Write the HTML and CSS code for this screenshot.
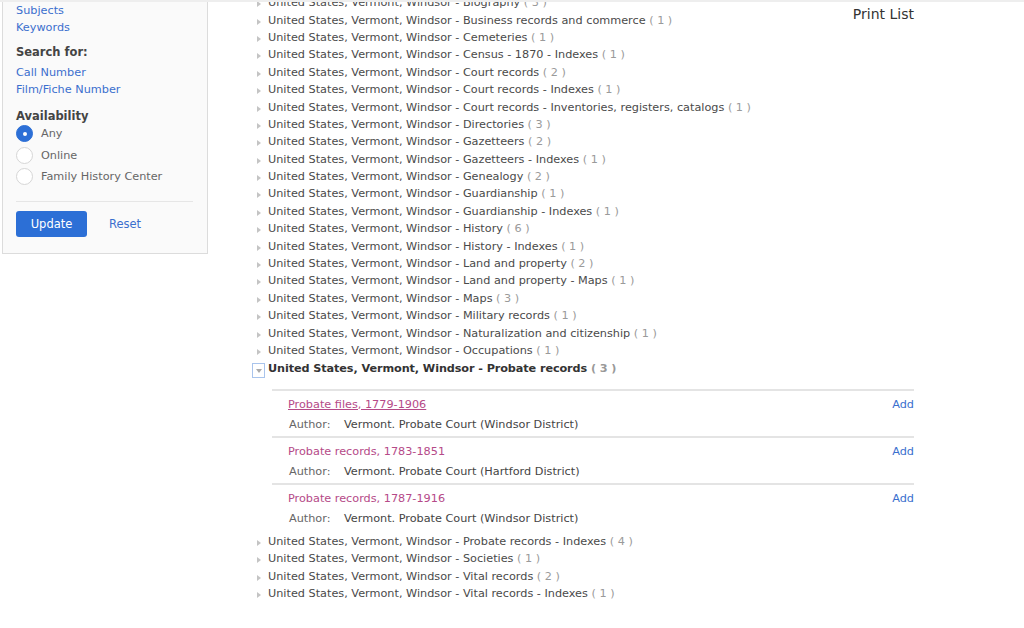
FILE: index.html
```html
<!DOCTYPE html>
<html>
<head>
<meta charset="utf-8">
<link rel="stylesheet" href="styles.css">
</head>
<body>
<div class="page">
  <aside class="sidebar">
    <a class="side-link" href="#">Subjects</a>
    <a class="side-link" href="#">Keywords</a>
    <h3 class="side-head">Search for:</h3>
    <a class="side-link" href="#">Call Number</a>
    <a class="side-link" href="#">Film/Fiche Number</a>
    <h3 class="side-head avail">Availability</h3>
    <label class="radio"><span class="dot on"></span>Any</label>
    <label class="radio"><span class="dot"></span>Online</label>
    <label class="radio"><span class="dot"></span>Family History Center</label>
    <div class="side-actions">
      <button class="btn">Update</button>
      <a class="reset" href="#">Reset</a>
    </div>
  </aside>
  <main class="main">
    <div class="tools"><a class="print" href="#">Print List</a></div>
    <ul class="tree">
      <li class="row"><span class="tri"></span>United States, Vermont, Windsor - Biography <span class="cnt">( 3 )</span></li>
      <li class="row"><span class="tri"></span>United States, Vermont, Windsor - Business records and commerce <span class="cnt">( 1 )</span></li>
      <li class="row"><span class="tri"></span>United States, Vermont, Windsor - Cemeteries <span class="cnt">( 1 )</span></li>
      <li class="row"><span class="tri"></span>United States, Vermont, Windsor - Census - 1870 - Indexes <span class="cnt">( 1 )</span></li>
      <li class="row"><span class="tri"></span>United States, Vermont, Windsor - Court records <span class="cnt">( 2 )</span></li>
      <li class="row"><span class="tri"></span>United States, Vermont, Windsor - Court records - Indexes <span class="cnt">( 1 )</span></li>
      <li class="row"><span class="tri"></span>United States, Vermont, Windsor - Court records - Inventories, registers, catalogs <span class="cnt">( 1 )</span></li>
      <li class="row"><span class="tri"></span>United States, Vermont, Windsor - Directories <span class="cnt">( 3 )</span></li>
      <li class="row"><span class="tri"></span>United States, Vermont, Windsor - Gazetteers <span class="cnt">( 2 )</span></li>
      <li class="row"><span class="tri"></span>United States, Vermont, Windsor - Gazetteers - Indexes <span class="cnt">( 1 )</span></li>
      <li class="row"><span class="tri"></span>United States, Vermont, Windsor - Genealogy <span class="cnt">( 2 )</span></li>
      <li class="row"><span class="tri"></span>United States, Vermont, Windsor - Guardianship <span class="cnt">( 1 )</span></li>
      <li class="row"><span class="tri"></span>United States, Vermont, Windsor - Guardianship - Indexes <span class="cnt">( 1 )</span></li>
      <li class="row"><span class="tri"></span>United States, Vermont, Windsor - History <span class="cnt">( 6 )</span></li>
      <li class="row"><span class="tri"></span>United States, Vermont, Windsor - History - Indexes <span class="cnt">( 1 )</span></li>
      <li class="row"><span class="tri"></span>United States, Vermont, Windsor - Land and property <span class="cnt">( 2 )</span></li>
      <li class="row"><span class="tri"></span>United States, Vermont, Windsor - Land and property - Maps <span class="cnt">( 1 )</span></li>
      <li class="row"><span class="tri"></span>United States, Vermont, Windsor - Maps <span class="cnt">( 3 )</span></li>
      <li class="row"><span class="tri"></span>United States, Vermont, Windsor - Military records <span class="cnt">( 1 )</span></li>
      <li class="row"><span class="tri"></span>United States, Vermont, Windsor - Naturalization and citizenship <span class="cnt">( 1 )</span></li>
      <li class="row"><span class="tri"></span>United States, Vermont, Windsor - Occupations <span class="cnt">( 1 )</span></li>
      <li class="row open"><span class="box"><span class="dtri"></span></span>United States, Vermont, Windsor - Probate records <span class="cnt">( 3 )</span></li>
      <li class="records">
        <div class="rec">
          <div class="rec-top"><a class="rec-title visited" href="#">Probate files, 1779-1906</a><a class="add" href="#">Add</a></div>
          <div class="rec-author"><span class="lbl">Author:</span>Vermont. Probate Court (Windsor District)</div>
        </div>
        <div class="rec">
          <div class="rec-top"><a class="rec-title" href="#">Probate records, 1783-1851</a><a class="add" href="#">Add</a></div>
          <div class="rec-author"><span class="lbl">Author:</span>Vermont. Probate Court (Hartford District)</div>
        </div>
        <div class="rec">
          <div class="rec-top"><a class="rec-title" href="#">Probate records, 1787-1916</a><a class="add" href="#">Add</a></div>
          <div class="rec-author"><span class="lbl">Author:</span>Vermont. Probate Court (Windsor District)</div>
        </div>
      </li>
      <li class="row"><span class="tri"></span>United States, Vermont, Windsor - Probate records - Indexes <span class="cnt">( 4 )</span></li>
      <li class="row"><span class="tri"></span>United States, Vermont, Windsor - Societies <span class="cnt">( 1 )</span></li>
      <li class="row"><span class="tri"></span>United States, Vermont, Windsor - Vital records <span class="cnt">( 2 )</span></li>
      <li class="row"><span class="tri"></span>United States, Vermont, Windsor - Vital records - Indexes <span class="cnt">( 1 )</span></li>
    </ul>
  </main>
</div>
</body>
</html>
```

FILE: styles.css
```css
* { box-sizing: border-box; }
html, body { margin: 0; padding: 0; background: #fff; }
body {
  font-family: "DejaVu Sans", Verdana, sans-serif;
  font-size: 11.25px;
  color: #444;
  border-top: 2px solid #eeeeee;
  height: 628px;
  overflow: hidden;
}
a { text-decoration: none; }
.page {
  display: flex;
  align-items: flex-start;
}
.sidebar {
  flex: none;
  width: 206px;
  margin-left: 2px;
  margin-top: -2px;
  background: #fafafa;
  border: 1px solid #dcdcdc;
  border-top: none;
  padding: 2px 14px 16px 13px;
  display: flex;
  flex-direction: column;
}
.side-link {
  color: #3a6fce;
  line-height: 17.2px;
}
.side-head {
  margin: 8px 0 3px;
  font-size: 11.5px;
  font-weight: bold;
  color: #444;
  line-height: 17px;
}
.side-head + .side-link + .side-link { margin-top: -1px; }
.side-head.avail { margin-top: 10px; margin-bottom: -2px; }
.radio {
  display: flex;
  align-items: center;
  height: 21.5px;
  color: #666;
  white-space: nowrap;
}
.dot {
  width: 17px;
  height: 17px;
  border-radius: 50%;
  border: 1px solid #d6d6d6;
  background: #fff;
  margin-right: 8px;
  flex: none;
  position: relative;
}
.dot.on {
  background: #2c6fd6;
  border-color: #2c6fd6;
}
.dot.on::after {
  content: "";
  position: absolute;
  left: 5.5px;
  top: 5.5px;
  width: 4px;
  height: 4px;
  border-radius: 50%;
  background: #fff;
}
.side-actions {
  margin-top: 14px;
  border-top: 1px solid #e6e6e6;
  padding-top: 9px;
  display: flex;
  align-items: center;
  gap: 22px;
}
.btn {
  width: 71px;
  height: 26px;
  background: #2c6fd6;
  color: #fff;
  border: none;
  border-radius: 3px;
  font-family: inherit;
  font-size: 11.5px;
}
.reset { color: #3a6fce; font-size: 11.5px; }

.main {
  flex: none;
  margin-left: 42px;
  margin-top: -8px;
  width: 664px;
}
.tools {
  float: right;
  margin-top: 12px;
  white-space: nowrap;
}
.print { color: #333; font-size: 14px; }
.tree {
  list-style: none;
  margin: 0;
  padding: 0;
}
.row {
  display: flex;
  align-items: center;
  height: 17.4px;
  white-space: pre;
  color: #4a4a4a;
}
.cnt { color: #9a9a9a; }
.tri {
  width: 0;
  height: 0;
  border-top: 3px solid transparent;
  border-bottom: 3px solid transparent;
  border-left: 4px solid #c4c4c4;
  margin-left: 7px;
  margin-right: 7px;
  margin-top: 3px;
}
.row.open {
  height: 18px;
  margin-top: 0.5px;
  font-weight: bold;
  color: #333;
  letter-spacing: -0.1px;
}
.row.open .cnt { font-weight: bold; color: #999; }
.box {
  width: 13px;
  height: 15px;
  border: 1px solid #a9c4ec;
  margin-left: 2px;
  margin-right: 3px;
  margin-top: 3px;
  display: flex;
  justify-content: center;
  align-items: center;
  padding-top: 2px;
}
.dtri {
  width: 0; height: 0;
  border-left: 3px solid transparent;
  border-right: 3px solid transparent;
  border-top: 4px solid #aaa;
}
.records {
  margin: 11px 0 2px 22px;
  width: 642px;
}
.rec {
  border-top: 2px solid #e4e4e4;
  height: 47.3px;
  padding: 5px 0 0 16px;
}
.rec-top {
  display: flex;
  justify-content: space-between;
  line-height: 17px;
}
.rec-title { color: #b54a88; }
.rec-title.visited { text-decoration: underline; }
.add { color: #3a6fce; }
.rec-author {
  margin-top: 3px;
  line-height: 17px;
  color: #444;
  padding-left: 1px;
}
.lbl {
  display: inline-block;
  width: 55px;
  color: #666;
}
```
